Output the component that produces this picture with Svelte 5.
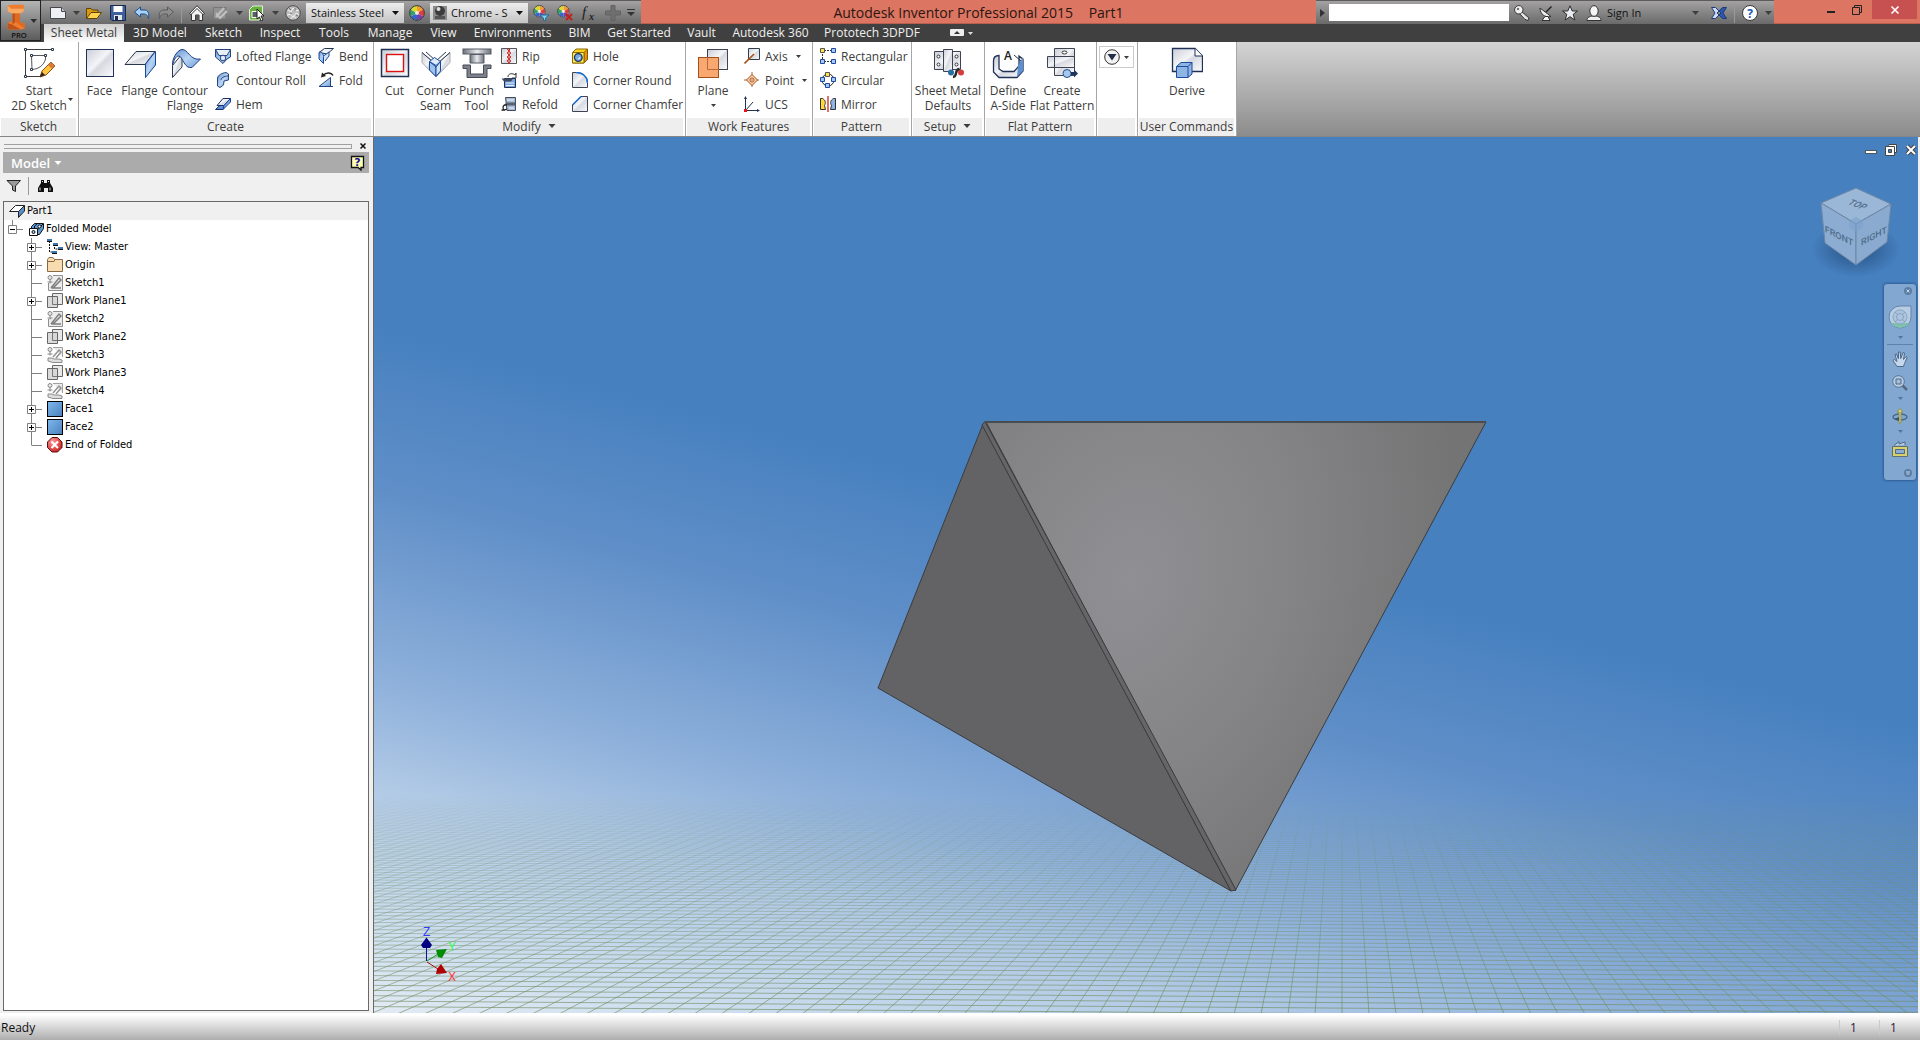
<script lang="ts">
  type Item = { icon: string; label: string; arrow?: boolean };
  type Group = { id: string; title: string; menu?: boolean; big: Item[]; cols: Item[][] };

  const tabs = [
    'Sheet Metal', '3D Model', 'Sketch', 'Inspect', 'Tools', 'Manage', 'View', 'Environments',
    'BIM', 'Get Started', 'Vault', 'Autodesk 360', 'Prototech 3DPDF'
  ];

  const groups: Group[] = [
    { id: 'sketch', title: 'Sketch', big: [{ icon: 'start', label: 'Start\n2D Sketch', arrow: true }], cols: [] },
    {
      id: 'create',
      title: 'Create',
      big: [
        { icon: 'face', label: 'Face' },
        { icon: 'flange', label: 'Flange' },
        { icon: 'contour', label: 'Contour\nFlange' }
      ],
      cols: [
        [
          { icon: 'lofted', label: 'Lofted Flange' },
          { icon: 'roll', label: 'Contour Roll' },
          { icon: 'hem', label: 'Hem' }
        ],
        [
          { icon: 'bend', label: 'Bend' },
          { icon: 'fold', label: 'Fold' }
        ]
      ]
    },
    {
      id: 'modify',
      title: 'Modify',
      menu: true,
      big: [
        { icon: 'cut', label: 'Cut' },
        { icon: 'seam', label: 'Corner\nSeam' },
        { icon: 'punch', label: 'Punch\nTool' }
      ],
      cols: [
        [
          { icon: 'rip', label: 'Rip' },
          { icon: 'unfold', label: 'Unfold' },
          { icon: 'refold', label: 'Refold' }
        ],
        [
          { icon: 'hole', label: 'Hole' },
          { icon: 'round', label: 'Corner Round' },
          { icon: 'chamfer', label: 'Corner Chamfer' }
        ]
      ]
    },
    {
      id: 'work',
      title: 'Work Features',
      big: [{ icon: 'plane', label: 'Plane', arrow: true }],
      cols: [
        [
          { icon: 'axis', label: 'Axis', arrow: true },
          { icon: 'point', label: 'Point', arrow: true },
          { icon: 'ucs', label: 'UCS' }
        ]
      ]
    },
    {
      id: 'pattern',
      title: 'Pattern',
      big: [],
      cols: [
        [
          { icon: 'rectangular', label: 'Rectangular' },
          { icon: 'circular', label: 'Circular' },
          { icon: 'mirror', label: 'Mirror' }
        ]
      ]
    },
    { id: 'setup', title: 'Setup', menu: true, big: [{ icon: 'defaults', label: 'Sheet Metal\nDefaults' }], cols: [] },
    {
      id: 'flat',
      title: 'Flat Pattern',
      big: [
        { icon: 'aside', label: 'Define\nA-Side' },
        { icon: 'flat', label: 'Create\nFlat Pattern' }
      ],
      cols: []
    },
    { id: 'convert', title: '', big: [], cols: [] },
    { id: 'user', title: 'User Commands', big: [{ icon: 'derive', label: 'Derive' }], cols: [] }
  ];

  // level, label, icon, branch: plus / minus / line / last
  const tree: [number, string, string, string][] = [
    [0, 'Part1', 'part', ''],
    [1, 'Folded Model', 'folded', 'minus'],
    [2, 'View: Master', 'view', 'plus'],
    [2, 'Origin', 'folder', 'plus'],
    [2, 'Sketch1', 'tsketch', 'line'],
    [2, 'Work Plane1', 'tplane', 'plus'],
    [2, 'Sketch2', 'tsketch', 'line'],
    [2, 'Work Plane2', 'tplane', 'line'],
    [2, 'Sketch3', 'tshared', 'line'],
    [2, 'Work Plane3', 'tplane', 'line'],
    [2, 'Sketch4', 'tshared', 'line'],
    [2, 'Face1', 'tface', 'plus'],
    [2, 'Face2', 'tface', 'plus'],
    [2, 'End of Folded', 'end', 'last']
  ];

  // floor grid, drawn in perspective
  const horizon = 604;
  const vanishX = 1342;
  let rows = '';
  for (let z = 72; z < 160; z++) {
    const d = 29500 / z;
    const tilt = d * 0.000018;
    const left = horizon + d - 968 * tilt;
    const right = horizon + d + 576 * tilt;
    rows += `M374 ${left.toFixed(2)}L1918 ${right.toFixed(2)}`;
  }
  let rays = '';
  for (let i = -90; i < 60; i++) {
    const x = i * 27;
    rays += `M${(vanishX + x * 0.42).toFixed(1)} 776L${vanishX + x} 1014`;
  }

  // 32 x 32 ribbon icons
  const large: Record<string, string> = {
    start: `<g fill="none" stroke="#3b3b3b"><path d="M2.5 2.5H29M2.5 2.5V29.5H17"/><path d="M8.5 8.5H22.5V12C21 18 16 22 9 22.5Z" fill="#fff" stroke="#555"/></g><g fill="#fff" stroke="#26364d"><path d="M1.500 1.500h2v2h-2zM28.500 1.500h2v2h-2zM1.500 28.500h2v2h-2zM7.500 7.500h2v2h-2zM21.500 7.500h2v2h-2zM7.500 21.500h2v2h-2z"/></g><path d="M17 30l2-6 9-9 4 4-9 9z" fill="#ffc53d" stroke="#8a4b14"/><path d="M25 18l4 4 3-3-4-4z" fill="#d87a3c"/><path d="M17 30l2-5 3 3z" fill="#222"/>`,
    face: `<rect x="2.500" y="2.500" width="27" height="27" fill="url(#metal)" stroke="#1f3156"/>`,
    flange: `<path d="M1 17.500L12 4.500H31L21 17.500z" fill="url(#metal)" stroke="#27364e"/><path d="M31.500 4.500V18L21.500 30.500V17z" fill="url(#blue)" stroke="#16479a"/>`,
    contour: `<path d="M3.500 18.500L13 7V20L3.500 30.500z" fill="url(#metal)" stroke="#27364e"/><path d="M3.500 18C3 12 8 3 13 2.500C19 2 21 14 31.500 12L23 20.500C15 22 14 10 10 9C6 9 5 14 3.500 18z" fill="url(#blue)" stroke="#1c3f7d"/>`,
    cut: `<rect x="2.500" y="2.500" width="27" height="27" fill="url(#metal)" stroke="#1f3156" stroke-width="1.500"/><rect x="7.500" y="7.500" width="17" height="17" fill="#fff" stroke="#d11" stroke-width="1.400"/>`,
    seam: `<path d="M2 5.500L15 17V29L2 15.500z" fill="url(#metal)" stroke="#aaa"/><path d="M30 5.500L17 17V29L30 15.500z" fill="url(#metal)" stroke="#aaa"/><path d="M2 5.500l13 11M6 5l10 9L26 5M30 5.500L18 16" fill="none" stroke="#27364e"/><path d="M9.500 14.500L16 20V29.500L9.500 23z" fill="#9ec3ee" stroke="#16479a"/><path d="M20.500 14.500L16 20V29.500L20.500 24z" fill="#cfe2f8" stroke="#16479a"/><path d="M9.500 14.500l5-4 6 4-4.500 4z" fill="#dcebfb" stroke="#16479a"/>`,
    punch: `<path d="M9 7.500H23V16H9z" fill="url(#steel)" stroke="#555a63"/><rect x="2" y="2" width="28" height="5" fill="url(#steel)" stroke="#555a63"/><path d="M2 18H9.500V27H22.500V18H30V21.500H26V30.500H6V21.500H2z" fill="#7d838d" stroke="#464b54"/>`,
    plane: `<rect x="10.500" y="2.500" width="20" height="20" fill="url(#metal)" stroke="#3a4456"/><rect x="1.500" y="10.500" width="20" height="20" fill="#f9a468" fill-opacity=".95" stroke="#a4501c"/><path d="M10.500 10.500V22.500H21.500" fill="none" stroke="#b96a3a"/>`,
    defaults: `<path d="M2.500 4.500H28.500V22.500H2.500z" fill="url(#metal)" stroke="#3d4350"/><path d="M11.500 2.500H20.500V24.500H11.500z" fill="url(#metal)" stroke="#3d4350"/><g fill="#fff" stroke="#333"><circle cx="6.500" cy="9.500" r="1.500"/><circle cx="6.500" cy="17.500" r="1.500"/><circle cx="24.500" cy="9.500" r="1.500"/><circle cx="24.500" cy="17.500" r="1.500"/></g><circle cx="19" cy="25.500" r="3" fill="#2a6ea8"/><circle cx="29" cy="25.500" r="3" fill="#d83b3b"/><path d="M21 30c5 0 1-8 6.500-8" fill="none" stroke="#2b2b2b" stroke-width="2.500"/>`,
    aside: `<path d="M1.500 14C1.500 10 4 8.500 7 8.500V22L11 24.500H22L27 19V9L31 12V24L25 30.500H7L1.500 25z" fill="url(#metal)" stroke="#1f3156" stroke-width="1.300"/><path d="M26 19l5-9v14l-6 6z" fill="#5b8fd0"/><path d="M22 8l7 6" stroke="#333"/><text x="16" y="13" text-anchor="middle" font-family="Open Sans, sans-serif" font-size="12" font-weight="600" fill="#222">A</text>`,
    flat: `<path d="M8.500 1.500H28.500V28.500H8.500z" fill="url(#metal)" stroke="#3d4350"/><path d="M1.500 9.500H28.500V20.500H1.500z" fill="url(#metal)" stroke="#3d4350"/><path d="M8.500 9V21" stroke="#3d4350"/><ellipse cx="18.500" cy="5.500" rx="2.500" ry="1.500" fill="#fff" stroke="#333"/><circle cx="21" cy="26.500" r="4" fill="#a7c7ee" stroke="#24508e"/><path d="M25 25h3v-2.500l4 4-4 4V28h-3z" fill="#1d355c"/>`,
    derive: `<path d="M1.500 1.500H24L31.500 9V24.500H1.500z" fill="url(#metal)" stroke="#1f3156" stroke-width="1.300"/><path d="M24 1.500V9H31.500" fill="#fff" stroke="#1f3156"/><path d="M5.500 19.500L10 15.500H21V27L17 30.500H5.500z" fill="#8fb6e3" stroke="#1c4ba0"/><path d="M5.500 19.500H17V30.500M17 19.500L21 15.500" fill="none" stroke="#1c4ba0"/>`
  };

  // 16 x 16 icons
  const small: Record<string, string> = {
    lofted: `<path d="M.5 1.500H15.500V9L12 11 8 15.500 4 12 .5 9z" fill="url(#blue)" stroke="#24457f"/><path d="M.5 1.500H15.500L12 7.500H4z" fill="#e9eff7" stroke="#24457f"/><circle cx="8" cy="10" r="2.800" fill="#dde9f8" stroke="#24457f"/>`,
    roll: `<path d="M2.500 6C3 3 7 1 11 .500L13.500 2V8L9 9 8.500 13 5 15.500 2.500 14z" fill="url(#blue)" stroke="#24457f"/><path d="M6 8c0-2 3-4 7-4" fill="none" stroke="#24457f"/>`,
    hem: `<path d="M.5 13.500L7 7.500H12L8 13.500z" fill="#5d8fd0" stroke="#16306a"/><path d="M2 9.500L8 2.500H15.500L9 9.500z" fill="url(#metal)" stroke="#16306a"/><path d="M9 9.500L15.500 2.500V6L8 13.500z" fill="#7eabe3" stroke="#1c3f9a"/>`,
    bend: `<path d="M1 4.500L6.500 .500H15.500L9 6z" fill="#eef3fa" stroke="#27364e"/><path d="M1 4.500C3 3 5 5 5.500 8V15.500L1 11z" fill="url(#blue)" stroke="#16479a"/><path d="M5.500 8L11 4V8L7 13" fill="#cfe2f8" stroke="#16479a"/>`,
    fold: `<path d="M1 14.500L12.500 5.500V14.500z" fill="url(#blue)" stroke="#24457f"/><path d="M1 14.500H15" stroke="#24457f"/><path d="M5 3.500C8 0 13 0 15 3.500" fill="none" stroke="#222" stroke-width="1.500"/><path d="M3 5.500L4 .500 8 4z" fill="#222"/>`,
    rip: `<path d="M.5 .500H15.500V15.500H.5z" fill="url(#metal)" stroke="#555"/><path d="M6 1l3 2-3 2 3 2-3 2 3 2-3 2 3 2M9 1l-2 2 3 2-3 2 3 2-3 2 3 2-3 2" fill="none" stroke="#d32222"/>`,
    unfold: `<path d="M3.500 6.500H14.500V15.500H3.500z" fill="#7ba5dd" stroke="#1f3156"/><path d="M.5 6.500H12L10 9.500H3z" fill="#3d4a60"/><path d="M5 11h8M5 13.500h8" stroke="#e6effa"/><path d="M7 5c0-4 5-4 7-2l1-2v5h-4" fill="none" stroke="#333"/>`,
    refold: `<path d="M4.500 1.500H14.500V14.500H6z" fill="#a5b8d4" stroke="#444c5a"/><path d="M6 6.500H14.500V9.500H2z" fill="#59616e"/><path d="M6 4h7M8 12h5" stroke="#f3f6fa"/><path d="M6 9c-4-1-5 3-3 5H.5M3 14l3-1" fill="none" stroke="#222" stroke-width="1.300"/>`,
    hole: `<path d="M.5 4.500L4 1H15.500V11.500L12 15H.5z" fill="#ffd21f" stroke="#8a6a00"/><path d="M12 4.500L15.500 1V11.500L12 15z" fill="#e8940a" stroke="#8a5a00"/><path d="M.5 4.500H12V15H.5z" fill="#ffe95a" stroke="#8a6a00"/><circle cx="6.300" cy="9.500" r="3.800" fill="#7aa9e0" stroke="#17325f" stroke-width="1.300"/><path d="M6 11a2 2 0 0 0 2-2" stroke="#fff" fill="none"/>`,
    round: `<path d="M.5 .500H5C11 .500 15.500 5 15.500 11V15.500H.5z" fill="url(#metal)" stroke="#3d4350"/><path d="M4 .500C11 .500 15.500 5 15.500 11" fill="none" stroke="#1c6fd0" stroke-width="1.500"/>`,
    chamfer: `<path d="M.5 15.500V9L9 .500H15.500V15.500z" fill="url(#metal)" stroke="#3d4350"/><path d="M.5 9L9 .500" stroke="#1c6fd0" stroke-width="1.500"/>`,
    axis: `<path d="M4.500 .500H15.500V11.500H4.500z" fill="url(#metal)" stroke="#333c4a"/><path d="M.5 15.500L10 6" stroke="#a8521e" stroke-width="1.600"/>`,
    point: `<path d="M8 0V16M0 8H16" stroke="#b2622b" stroke-dasharray="3 1"/><path d="M8 2.500L13.500 8 8 13.500 2.500 8z" fill="#fbd0a4" stroke="#a8521e"/><circle cx="8" cy="8" r="2" fill="#fff" stroke="#a8521e"/><circle cx="8" cy="8" r=".8" fill="#a8521e"/>`,
    ucs: `<path d="M1.500 13V1M1.500 14.500H15M2 14L9 6" fill="none" stroke="#1f3156"/><path d="M1.500 0L0 3h3zM16 14.500L13 13v3z" fill="#1f3156"/><path d="M0 13h3v3H0z" fill="#e11"/>`,
    rectangular: `<path d="M2.500 3V13M4 2.500H12M4 13.500H12" stroke="#333" stroke-dasharray="2 1"/><path d="M.5 .500h4v4h-4z" fill="#ffe14a" stroke="#555"/><path d="M11.500 .500h4v4h-4zM.5 11.500h4v4h-4zM11.500 11.500h4v4h-4z" fill="#a6c8f2" stroke="#1c4ba0"/>`,
    circular: `<circle cx="8" cy="8" r="6" fill="none" stroke="#222"/><path d="M5.500 .500h4v4h-4z" fill="#ffe14a" stroke="#555"/><path d="M.5 5.500h4v4h-4zM11.500 5.500h4v4h-4zM5.500 11.500h4v4h-4z" fill="#a6c8f2" stroke="#1c4ba0"/>`,
    mirror: `<path d="M8 0V16" stroke="#d32222" stroke-width="1.300"/><path d="M.5 2.500H2.500C5.500 4 6 7 4.500 9.500L5.500 13.500H.5z" fill="#ffd93a" stroke="#333"/><path d="M15.500 2.500H13.500C10.500 4 10 7 11.500 9.500L10.500 13.500H15.500z" fill="#8fb6e3" stroke="#333"/>`,

    // title bar
    new: `<path d="M.5 2.500H11.500L15.500 6.500V13.500H.5z" fill="#eef0f3" stroke="#44474d"/><path d="M11.500 2.500V6.500H15.500" fill="#c7ccd4" stroke="#44474d"/>`,
    open: `<path d="M.5 13.500V3.500H5L6.500 5H12V8" fill="#d99a12" stroke="#5e430a"/><path d="M.5 13.500L5 7.500H15.500L11 13.500z" fill="#ffd34d" stroke="#5e430a"/>`,
    save: `<path d="M.5 .500H15.500V15.500H2L.5 14z" fill="#3e5f99" stroke="#16294d"/><path d="M3.500 1H12.500V7H3.500z" fill="#fff"/><path d="M4 10H12V15H4z" fill="#e4e7ec"/><path d="M5 11h3v4H5z" fill="#1b2b4a"/>`,
    undo: `<path d="M.5 7L6.500 2V5H10C14 5 15.500 8 14.500 13.500C13.500 10 12 9 10 9H6.500V12z" fill="#a9d1f7" stroke="#1b4f8c"/>`,
    redo: `<path d="M15.500 7L9.500 2V5H6C2 5 .500 8 1.500 13.500C2.500 10 4 9 6 9H9.500V12z" fill="#8e8e8e" stroke="#5a5a5a"/>`,
    home: `<path d="M2.500 8V15.500H6.500V10H10V15.500H13.500V8L8 3z" fill="#f2f2f2" stroke="#333"/><path d="M.5 8.500L8 .700 15.500 8.500 14 9.500 8 3.500 2 9.500z" fill="#fff" stroke="#333"/><path d="M6.500 15V10H10V15z" fill="#555"/>`,
    update: `<path d="M.5 2.500H13V14H.5z" fill="#929292" stroke="#777"/><path d="M3 12L11 3M3 8l4 5 7-7" stroke="#c0c0c0" stroke-width="2" fill="none"/>`,
    select: `<path d="M.5 4.500L4 1H13.500V11L10 15H.5z" fill="#65b13c" stroke="#e4f4d8"/><path d="M3 6.500h6v6H3z" fill="#5a5f66" stroke="#fff"/><path d="M8 4L15 11H12L14 15 12 16 10.500 12 8 14z" fill="#fff" stroke="#222"/>`,
    ball: `<circle cx="8" cy="8" r="7.300" fill="#bcbcbc" stroke="#4e4e4e"/><path d="M3 5l3 2 2-4 3 3 3-1M2 10l4-1 2 3 3-4 3 2M6 14l2-3 3 2" fill="none" stroke="#f4f4f4"/><path d="M4 3l2 2M10 3v3M5 8l2 1M11 10l2 1" stroke="#777"/>`,
    wheel: `<circle cx="8" cy="8" r="7.500" fill="#fff"/><path d="M8 8V.800A7.200 7.200 0 0 1 14.200 4.400z" fill="#f49b30"/><path d="M8 8L14.200 4.400A7.200 7.200 0 0 1 14.200 11.600z" fill="#e0403a"/><path d="M8 8L14.200 11.600A7.200 7.200 0 0 1 8 15.200z" fill="#7a3fa8"/><path d="M8 8V15.200A7.200 7.200 0 0 1 1.800 11.600z" fill="#3366cc"/><path d="M8 8L1.800 11.600A7.200 7.200 0 0 1 1.800 4.400z" fill="#35a06a"/><path d="M8 8L1.800 4.400A7.200 7.200 0 0 1 8 .800z" fill="#d9d92e"/><circle cx="8" cy="8" r="7.400" fill="none" stroke="#333"/><circle cx="8" cy="8" r="2" fill="#fff" opacity=".8"/>`,
    fx: `<text x="1" y="12" font-family="Liberation Serif, serif" font-style="italic" font-size="15" fill="#1d1d1d">f</text><text x="8" y="15" font-family="Liberation Serif, serif" font-style="italic" font-weight="700" font-size="10" fill="#1d1d1d">x</text>`,
    plus: `<path d="M6 0.500H10V6H15.500V10H10V15.500H6V10H.5V6H6z" fill="#6f6f6f" stroke="#626262"/>`,
    key: `<path d="M5 8l2-2 8 7-1 2.500-3-1z" fill="#e3e3e3" stroke="#333"/><circle cx="4.800" cy="4.800" r="4.200" fill="#f4f4f4" stroke="#333"/><circle cx="4" cy="4" r="1.300" fill="#777"/>`,
    dish: `<path d="M2 3C2 9 7 13 13 11.500z" fill="#eee" stroke="#333"/><path d="M8 7L13.500 1.500" stroke="#222" stroke-width="1.500"/><path d="M4 15.500L7 11.500H10L12 15.500z" fill="#f6f6f6" stroke="#333"/>`,
    star: `<path d="M8 .800L10.200 6H15.500L11.200 9.300 12.800 15 8 11.700 3.200 15 4.800 9.300.500 6H5.800z" fill="#e9ecf2" stroke="#2b2b2b"/>`,
    person: `<path d="M1 15.500C1 12 4 11.500 6 11H10C12 11.500 15 12 15 15.500z" fill="#eee" stroke="#333"/><ellipse cx="8" cy="6" rx="4.200" ry="5.300" fill="#f4f4f4" stroke="#333"/>`,
    exchange: `<path d="M.5 2.500H4.500L8 6 6 8 8 10 4.500 13.500H.5L4 8z" fill="#cfdcf5" stroke="#1f3b78"/><path d="M15.500 2.500H11.500L8 6 10 8 8 10 11.500 13.500H15.500L12 8z" fill="#2d57ad" stroke="#1f3b78"/>`,
    help: `<circle cx="8" cy="8" r="7.500" fill="#fff" stroke="#3a3a3a"/><text x="8" y="13" text-anchor="middle" font-family="Open Sans, sans-serif" font-size="12" font-weight="700" fill="#2057b0">?</text>`,

    // browser
    part: `<path d="M.5 8.500L6.500 2.500H15.500L9.500 8.500z" fill="#fff" stroke="#222"/><path d="M15.500 2.500V8L9.500 14.500V8.500z" fill="#5b8fc7" stroke="#222"/>`,
    folded: `<path d="M3.500 5.500L6.500 2.500H15.500V7.500L11.500 13.500H3.500z" fill="#5e9ad6" stroke="#111"/><path d="M1.500 7.500H9.500V14.500H1.500z" fill="#fff" stroke="#111"/><path d="M6.500 7V5L9 3M9.500 9L15 3" fill="none" stroke="#111"/><circle cx="11.500" cy="5.500" r="1.500" fill="#fff" stroke="#111"/><circle cx="5.500" cy="11" r="1.500" fill="#9cc4ec" stroke="#111"/>`,
    view: `<path d="M2.500 2V13H6M7.500 5V10H12" fill="none" stroke="#111" stroke-dasharray="2 1"/><path d="M0 0h5v3H0zM6 4h5v3H6zM11 8h5v3h-5zM5 12h5v3H5z" fill="#3e76b4"/><path d="M0 2.500h5M6 6.500h5M11 10.500h5M5 14.500h5" stroke="#111"/>`,
    folder: `<path d="M.5 2.500L2 .500H6L7.500 2.500H15.500V14.500H.5z" fill="#f6dcae" stroke="#8a6a45"/><path d="M1 4.500H7L8 2.500" fill="none" stroke="#8a6a45"/>`,
    tsketch: `<path d="M6 .500H15.500V15.500H1.500V8" fill="#ececec" stroke="#8f8f8f"/><path d="M4 13L12 3l2 2-8 8H14" fill="none" stroke="#7d7d7d" stroke-width="1.500"/><circle cx="3" cy="2.500" r="2" fill="#e6e6e6" stroke="#888"/><path d="M3 4.500v4M.5 7h5" stroke="#888"/>`,
    tshared: `<path d="M6 .500H15.500V10" fill="#ececec" stroke="#a0a0a0"/><path d="M6 10L12 3l2 2-5 6" fill="none" stroke="#929292" stroke-width="1.500"/><circle cx="3" cy="2.500" r="2" fill="#e6e6e6" stroke="#888"/><path d="M3 4.500v4M.5 7h5" stroke="#888"/><path d="M1 11h4l2 1h5l3 1v2.500H6L1 14z" fill="#dedede" stroke="#8a8a8a"/>`,
    tplane: `<path d="M5.500 .500H15.500V11.500H5.500z" fill="#e8e8e8" stroke="#666"/><path d="M.5 3.500H10.500V14.500H.5z" fill="#d4d4d4" fill-opacity=".85" stroke="#666"/><path d="M5.500 4V11.500H10" fill="none" stroke="#777"/>`,
    tface: `<rect x=".5" y=".5" width="15" height="15" fill="url(#tile)" stroke="#000"/>`,
    end: `<path d="M5 .500H10.500L15 5V10.500L10.500 15H5L.5 10.500V5z" fill="url(#stop)" stroke="#5a1111"/><path d="M4.500 4.500L11 11M11 4.500L4.500 11" stroke="#fff" stroke-width="2.200"/>`,
    funnel: `<path d="M1 2.500H14.500L9.500 8V13.500L6.500 12V8z" fill="#9a9a9a" stroke="#222"/>`,
    binoculars: `<path d="M3 2h3v3h3V2h3v3l3 5v4h-5v-4H6v4H0v-4l3-5z" fill="#111"/><path d="M2 9.500v3M12 9.500v3M4.500 3v1M10.500 3v1" stroke="#ddd"/>`,
    tip: `<path d="M1.500 1.500H13.500V12.500H11V15L8 12.500H1.500z" fill="#ffffb4" stroke="#111" stroke-width="1.300"/><text x="7.500" y="11" text-anchor="middle" font-family="DejaVu Sans, sans-serif" font-size="11" font-weight="700" fill="#14149c">?</text>`,

    // navigation bar
    pan: `<path d="M5 15.500L1 9.500 2.500 8.500 5 10.500 3 3.500 4.500 3 6.500 8 6.500 1 8.200 1 8.800 7.500 11 1.500 12.500 2 11.500 8.500 14 5.500 15.200 6.500 12.500 12.500 11.500 15.500z" fill="#c5d7ea" stroke="#4f6988"/>`,
    zoom: `<path d="M10.500 10.500L15 15" stroke="#56677d" stroke-width="2.500"/><circle cx="6.500" cy="6.500" r="5.800" fill="#b8cde4" stroke="#56708f"/><path d="M4 4h5v5H4z" fill="#a3bddb" stroke="#4f6988"/>`,
    orbit: `<ellipse cx="8" cy="9" rx="7" ry="3" fill="none" stroke="#4a6788" stroke-width="1.400"/><path d="M7 15V4H5L8 .500 11 4H9V15z" fill="#d8d068" stroke="#8d8f58"/><path d="M2 11l5-2v4z" fill="#3c546f"/>`,
    look: `<path d="M.5 5.500H15.500V15.500H.5z" fill="#d8d068" stroke="#5f6f70"/><path d="M3.500 8.500H12.500V12.500H3.500z" fill="#8aaed4" stroke="#4f6988"/><path d="M2 4.500L7 .500V3L13 1V4" fill="#b8cde4" stroke="#4f6988"/>`
  };

  let activeTab = 'Sheet Metal';
  let search = '';
</script>

{#snippet icon(name: string)}
  <svg class="icon" viewBox="0 0 16 16" aria-hidden="true">{@html small[name]}</svg>
{/snippet}

{#snippet caret()}
  <svg class="caret" viewBox="0 0 7 4" aria-hidden="true"><path d="M0 0H7L3.500 4z" fill="currentColor" /></svg>
{/snippet}

{#snippet quick(name: string, label: string)}
  <button class="quick" aria-label={label}>{@render icon(name)}</button>
{/snippet}

{#snippet quickMenu(label: string)}
  <button class="quick-menu" aria-label={label}>{@render caret()}</button>
{/snippet}

<svg class="defs" width="0" height="0" aria-hidden="true">
  <defs>
    <linearGradient id="metal" x1="0" y1="0" x2="1" y2="1">
      <stop offset="0" stop-color="#c9cdd6" />
      <stop offset=".45" stop-color="#f4f5f8" />
      <stop offset=".55" stop-color="#d6d9e0" />
      <stop offset="1" stop-color="#fbfbfd" />
    </linearGradient>
    <linearGradient id="blue" x1="0" y1="0" x2="1" y2="1">
      <stop offset="0" stop-color="#5f8fcf" />
      <stop offset=".5" stop-color="#b9d4f3" />
      <stop offset="1" stop-color="#6d9dd8" />
    </linearGradient>
    <linearGradient id="steel">
      <stop offset="0" stop-color="#6b717b" />
      <stop offset=".5" stop-color="#e9ebef" />
      <stop offset="1" stop-color="#6b717b" />
    </linearGradient>
    <linearGradient id="tile" x1="0" y1="0" x2="1" y2="1">
      <stop offset="0" stop-color="#7db9ee" />
      <stop offset="1" stop-color="#4a80ba" />
    </linearGradient>
    <radialGradient id="stop" cx=".35" cy=".3" r=".8">
      <stop offset="0" stop-color="#ff9a9a" />
      <stop offset="1" stop-color="#c81818" />
    </radialGradient>
  </defs>
</svg>

<div class="window">
  <header>
    <button class="app-button" aria-label="Application menu">
      <svg viewBox="0 0 40 40" aria-hidden="true">
        <path d="M7 4L12 3H24V10L20 12V21L25 23V28L21 29H7V22L12 20V12L7 10z" fill="#f07c2e" />
        <path d="M7 4L12 8V12L7 10zM12 7H24V10L20 12H12z" fill="#f9aa62" />
        <path d="M12 12H15V21L12 24zM7 22L12 24 21 29H7z" fill="#bd541b" />
        <path d="M20 12V21L25 23V28L15 21V12z" fill="#de6a22" />
        <path d="M31 18H38L34.500 22z" fill="#2e2e2e" />
        <text x="19" y="38" text-anchor="middle">PRO</text>
      </svg>
    </button>

    <div class="title-bar">
      <div class="toolbar quick-access">
        {@render quick('new', 'New')}
        {@render quickMenu('New options')}
        {@render quick('open', 'Open')}
        {@render quick('save', 'Save')}
        {@render quick('undo', 'Undo')}
        {@render quick('redo', 'Redo')}
        <span class="divider"></span>
        {@render quick('home', 'Home')}
        {@render quick('update', 'Update')}
        {@render quickMenu('Update options')}
        {@render quick('select', 'Select')}
        {@render quickMenu('Select options')}
        {@render quick('ball', 'Material')}
        <span class="combo">
          <select aria-label="Material"><option>Stainless Steel</option></select>
          {@render caret()}
        </span>
        {@render quick('wheel', 'Appearance')}
        <span class="combo chrome">
          <svg class="icon" viewBox="0 0 16 16" aria-hidden="true">
            <path d="M1 1h14v14H1z" fill="#8b8b8b" /><circle cx="8" cy="6" r="5" fill="#3c3c3c" />
            <circle cx="6.500" cy="4" r="2" fill="#ddd" /><path d="M3 11h10v3H3z" fill="#555" />
          </svg>
          <select aria-label="Appearance"><option>Chrome - S</option></select>
          {@render caret()}
        </span>
        <button class="quick" aria-label="Adjust">
          <svg class="icon" viewBox="0 0 16 16" aria-hidden="true">
            <g transform="scale(.8)">{@html small.wheel}</g>
            <path d="M7 10h9l-3.500 3v2.500h-2V13z" fill="#7fd0f5" stroke="#1e6c9c" />
          </svg>
        </button>
        <button class="quick" aria-label="Clear">
          <svg class="icon" viewBox="0 0 16 16" aria-hidden="true">
            <g transform="scale(.8)">{@html small.wheel}</g>
            <path d="M9 9l6 6M15 9l-6 6" stroke="#c3201a" stroke-width="2" />
          </svg>
        </button>
        {@render quick('fx', 'Parameters')}
        {@render quick('plus', 'Add')}
        <button class="quick-menu" aria-label="Customize">
          <svg class="icon" viewBox="0 0 16 16" aria-hidden="true">
            <path d="M4 4.500h8" stroke="#333" /><path d="M4 7h8l-4 4z" fill="#333" />
          </svg>
        </button>
      </div>

      <h1>Autodesk Inventor Professional 2015 <span>Part1</span></h1>

      <div class="toolbar info-center">
        <button class="quick-menu" aria-label="Collapse search">
          <svg class="side" viewBox="0 0 5 8" aria-hidden="true"><path d="M0 0L5 4 0 8z" fill="#333" /></svg>
        </button>
        <input type="search" aria-label="Search help" bind:value={search} />
        {@render quick('key', 'Subscription')}
        {@render quick('dish', 'Communication')}
        {@render quick('star', 'Favorites')}
        <button class="sign-in">{@render icon('person')}Sign In</button>
        {@render quickMenu('Account')}
        {@render quick('exchange', 'Exchange apps')}
        <span class="divider"></span>
        {@render quick('help', 'Help')}
        {@render quickMenu('Help options')}
      </div>

      <div class="window-buttons">
        <button aria-label="Minimize">
          <svg viewBox="0 0 10 10" aria-hidden="true"><path d="M1 6h8v2H1z" fill="#222" /></svg>
        </button>
        <button aria-label="Restore">
          <svg viewBox="0 0 10 10" aria-hidden="true">
            <path d="M.5 2.500h7v7h-7zM2.500 2V.500h7v7H8" fill="none" stroke="#222" />
          </svg>
        </button>
        <button class="close" aria-label="Close">
          <svg viewBox="0 0 10 10" aria-hidden="true"><path d="M1.500 1.500l7 7M8.500 1.500l-7 7" stroke="#fff" stroke-width="1.600" /></svg>
        </button>
      </div>
    </div>

    <nav class="tabs">
      {#each tabs as tab}
        <button class:active={tab === activeTab} on:click={() => (activeTab = tab)}>{tab}</button>
      {/each}
      <button class="ribbon-toggle" aria-label="Ribbon display">
        <svg viewBox="0 0 24 8" aria-hidden="true">
          <rect width="14" height="7" rx="1" fill="#eee" /><path d="M4 5h6L7 2z" fill="#333" />
          <path d="M18 3h5l-2.500 3z" fill="#ddd" />
        </svg>
      </button>
    </nav>
  </header>

  <div class="ribbon">
    {#each groups as group}
      <section class="group {group.id}">
        <div class="tools">
          {#each group.big as item}
            <button class="big">
              <svg viewBox="0 0 32 32" aria-hidden="true">{@html large[item.icon]}</svg>
              <span>{item.label}</span>
              {#if item.arrow}{@render caret()}{/if}
            </button>
          {/each}
          {#each group.cols as col}
            <div class="stack">
              {#each col as item}
                <button class="small">
                  {@render icon(item.icon)}{item.label}
                  {#if item.arrow}{@render caret()}{/if}
                </button>
              {/each}
            </div>
          {/each}
          {#if group.id === 'convert'}
            <button class="convert-button" aria-label="Convert">
              <svg class="icon" viewBox="0 0 16 16" aria-hidden="true">
                <circle cx="8" cy="8" r="7.300" fill="#f2f2f2" stroke="#333" />
                <path d="M3.500 5h9L8 11.500z" fill="#222f44" />
              </svg>
              {@render caret()}
            </button>
          {/if}
        </div>
        <h2>{group.title}{#if group.menu}{@render caret()}{/if}</h2>
      </section>
    {/each}
  </div>

  <main>
    <aside>
      <div class="grip">
        <span></span>
        <button aria-label="Close panel">
          <svg viewBox="0 0 6 6" aria-hidden="true"><path d="M.5 .500l5 5M5.500 .500l-5 5" stroke="#111" stroke-width="1.500" /></svg>
        </button>
      </div>
      <div class="panel-title">
        <button>Model {@render caret()}</button>
        <button aria-label="Panel help">{@render icon('tip')}</button>
      </div>
      <div class="panel-tools">
        <button aria-label="Filter">{@render icon('funnel')}</button>
        <button aria-label="Find">{@render icon('binoculars')}</button>
      </div>
      <ul class="tree">
        {#each tree as [level, label, name, branch]}
          <li class="level{level}">
            {#if branch}
              <svg class="branch" viewBox="0 0 19 18" aria-hidden="true">
                <path d="M4.500 0V{branch === 'last' || level === 1 ? 9 : 18}M4.500 9.500H15" fill="none" stroke="#808080" />
                {#if branch === 'plus' || branch === 'minus'}
                  <path d="M.5 5.500h8v8h-8z" fill="#fff" stroke="#808080" />
                  <path d={branch === 'plus' ? 'M2 9.500h5M4.500 7v5' : 'M2 9.500h5'} stroke="#000" />
                {/if}
              </svg>
            {/if}
            {@render icon(name)}<span>{label}</span>
          </li>
        {/each}
      </ul>
    </aside>

    <div class="viewport">
      <svg class="scene" viewBox="374 137 1544 876" preserveAspectRatio="xMidYMid slice" aria-hidden="true">
        <defs>
          <linearGradient id="floor" gradientUnits="userSpaceOnUse" x1="0" y1="795" x2="0" y2="1013">
            <stop offset="0" stop-color="#6f8c6c" stop-opacity="0" />
            <stop offset=".3" stop-color="#6f8c6c" stop-opacity=".25" />
            <stop offset="1" stop-color="#6f8c5c" stop-opacity=".65" />
          </linearGradient>
          <radialGradient
            id="shine"
            gradientUnits="userSpaceOnUse"
            cx="0"
            cy="0"
            r="420"
            gradientTransform="translate(1130 580) rotate(18) scale(.75 1)"
          >
            <stop offset="0" stop-color="#909094" />
            <stop offset=".5" stop-color="#848486" />
            <stop offset="1" stop-color="#747475" />
          </radialGradient>
        </defs>
        <g fill="none" stroke="url(#floor)">
          <path d={rows} /><path d={rays} />
        </g>
        <path d="M983 424L878 688 1231 891z" fill="#636366" stroke="#3b3b3c" />
        <path d="M986 422H1486L1235 891z" fill="url(#shine)" stroke="#3b3b3c" />
        <path d="M982 425L985 421.500 1236 890 1231 891z" fill="#666668" stroke="#3b3b3c" />
        <path d="M985 422H1486" stroke="#4a4d50" stroke-width="2" />

        <g class="axes">
          <path d="M426.500 961V942" stroke="#1010a0" />
          <path d="M421 945L426.500 937.500 432 945 430 948H423z" fill="#000080" />
          <path d="M427 961L438 954" stroke="#0aa020" />
          <path d="M436 950L447 949 442 958 438 957z" fill="#008c00" />
          <path d="M427 962L438 969" stroke="#a01010" />
          <path d="M441 964L447 973 436 974 437 969z" fill="#b00000" />
          <text x="423" y="936" fill="#3a3aff">Z</text>
          <text x="448" y="951" fill="#2aff4a">Y</text>
          <text x="448" y="981" fill="#ff3030">X</text>
        </g>
      </svg>

      <div class="overlay">
        <div class="doc-buttons">
          <button aria-label="Minimize document">
            <svg viewBox="0 0 12 12" aria-hidden="true"><rect x=".5" y="6.500" width="11" height="3" fill="#fff" stroke="#555" /></svg>
          </button>
          <button aria-label="Restore document">
            <svg viewBox="0 0 12 12" aria-hidden="true">
              <path d="M3.500 .500h8v8h-2" fill="#fff" stroke="#444" />
              <path d="M.5 2.500h9v9h-9z" fill="#fff" stroke="#444" /><path d="M3.500 5.500h3v3h-3z" fill="#4680bf" stroke="#444" />
            </svg>
          </button>
          <button aria-label="Close document">
            <svg viewBox="0 0 12 12" aria-hidden="true">
              <path d="M2 2l8 8M10 2l-8 8" stroke="#444" stroke-width="4" /><path d="M2 2l8 8M10 2l-8 8" stroke="#fff" stroke-width="2" />
            </svg>
          </button>
        </div>

        <svg class="cube" viewBox="0 0 90 100" aria-label="View cube">
          <defs>
            <radialGradient id="shadow">
              <stop offset="0" stop-color="#1d4474" stop-opacity=".8" />
              <stop offset="1" stop-color="#1d4474" stop-opacity="0" />
            </radialGradient>
          </defs>
          <ellipse cx="45" cy="66" rx="44" ry="28" fill="url(#shadow)" />
          <g stroke="#6d87a5" stroke-linejoin="round">
            <path d="M45 5L80 21 45 41 10 20z" fill="#9ab7d7" />
            <path d="M10 20L45 41V82L14 60z" fill="#8cadd1" />
            <path d="M80 21L45 41V82L76 59z" fill="#8aabcf" />
          </g>
          <path d="M45 34l7 4v7l-7 4-7-4v-7z" fill="#7ba1cd" opacity=".6" />
          <text transform="translate(28 56) skewY(27)" text-anchor="middle">FRONT</text>
          <text transform="translate(63 56) skewY(-27)" text-anchor="middle">RIGHT</text>
          <text transform="translate(44 24) rotate(20) skewX(-30)" text-anchor="middle">TOP</text>
        </svg>

        <div class="nav-bar">
          <button class="nav-end" aria-label="Close navigation bar">
            <svg viewBox="0 0 8 8" aria-hidden="true"><circle cx="4" cy="4" r="4" fill="#5b7da5" /><path d="M2.500 2.500l3 3M5.500 2.500l-3 3" stroke="#c8d9ea" /></svg>
          </button>
          <button class="nav-wheel" aria-label="Steering wheel">
            <svg viewBox="0 0 24 24" aria-hidden="true">
              <path d="M23 1V12A11 11 0 1 1 12 1z" fill="#b9cde2" stroke="#6384a9" />
              <path d="M3 18H21A11 11 0 0 1 3 18z" fill="#7fc2ac" />
              <circle cx="12" cy="12" r="7" fill="#adc4dd" stroke="#88a4c4" /><circle cx="12" cy="12" r="3.500" fill="none" stroke="#88a4c4" />
              <path d="M7 7l3 3M17 7l-3 3M7 17l3-3M17 17l-3-3" stroke="#88a4c4" />
            </svg>
          </button>
          <button class="nav-menu" aria-label="Wheel options">{@render caret()}</button>
          <hr />
          <button class="nav-tool" aria-label="Pan">{@render icon('pan')}</button>
          <button class="nav-tool" aria-label="Zoom">{@render icon('zoom')}</button>
          <button class="nav-menu" aria-label="Zoom options">{@render caret()}</button>
          <button class="nav-tool" aria-label="Orbit">{@render icon('orbit')}</button>
          <button class="nav-menu" aria-label="Orbit options">{@render caret()}</button>
          <button class="nav-tool" aria-label="Look at">{@render icon('look')}</button>
          <button class="nav-end last" aria-label="Customize navigation bar">
            <svg viewBox="0 0 8 8" aria-hidden="true"><circle cx="4" cy="4" r="4" fill="#5b7da5" /><path d="M2 3h4M2.500 5h3" stroke="#c8d9ea" /></svg>
          </button>
        </div>
      </div>
    </div>
  </main>

  <footer>
    <span>Ready</span>
    <output>1</output>
    <output>1</output>
  </footer>
</div>

<style>
  :global(body) {
    margin: 0;
    overflow: hidden;
  }

  .defs {
    position: absolute;
  }

  .window {
    display: flex;
    flex-direction: column;
    height: 100vh;
    background: #f0f0f0;
    font: 12px/15px 'Open Sans', 'Noto Sans', sans-serif;
    color: #3c3c3c;
  }

  button,
  select,
  input {
    margin: 0;
    padding: 0;
    border: 0;
    background: none;
    font: inherit;
    color: inherit;
  }

  svg {
    display: block;
    flex: none;
  }

  .icon {
    width: 16px;
    height: 16px;
  }

  .caret {
    width: 5px;
    height: 3px;
  }

  /* Title bar */
  header {
    display: grid;
    grid-template: 24px 18px / 41px 1fr;
    background: #404040;
  }

  .app-button {
    grid-row: 1 / 3;
    height: 41px;
    border: 1px solid #222;
    background: linear-gradient(#b4b4b4, #5c5c5c);
  }

  .app-button svg {
    width: 38px;
    height: 38px;
  }

  .app-button text {
    font-size: 8px;
    font-weight: 600;
    fill: #111;
  }

  .title-bar {
    display: flex;
    background: #dc7561;
    box-shadow: inset 0 -1px #b95f4e;
  }

  .toolbar {
    display: flex;
    align-items: center;
    box-sizing: border-box;
    border-top: 1px solid #5c5c5c;
    background: linear-gradient(#a3a1a2, #6a6a6a);
    color: #3f3f3f;
  }

  .quick-access {
    width: 600px;
    padding-left: 5px;
  }

  .quick {
    display: flex;
    justify-content: center;
    width: 24px;
  }

  .quick-menu {
    display: flex;
    justify-content: center;
    width: 12px;
  }

  .divider {
    width: 1px;
    height: 20px;
    margin: 0 3px;
    background: #999;
  }

  .side {
    width: 5px;
    height: 8px;
  }

  .combo {
    display: flex;
    align-items: center;
    box-sizing: border-box;
    width: 98px;
    height: 20px;
    margin: 0 1px;
    padding: 0 5px;
    background: linear-gradient(#ededed, #c4c4c4);
    font-size: 11px;
    color: #111;
  }

  .combo select {
    flex: 1;
    min-width: 0;
    appearance: none;
  }

  .combo .caret,
  .quick-menu .caret {
    width: 7px;
    height: 4px;
  }

  .combo.chrome {
    gap: 3px;
    padding-left: 2px;
  }

  h1 {
    flex: 1;
    margin: 0;
    font-size: 14px;
    font-weight: 400;
    line-height: 25px;
    text-align: center;
    color: #2a1512;
  }

  h1 span {
    margin-left: 12px;
  }

  .info-center {
    width: 458px;
  }

  .info-center input {
    width: 180px;
    height: 17px;
    margin: 0 1px;
    background: #fff;
  }

  .sign-in {
    display: flex;
    align-items: center;
    gap: 5px;
    flex: 1;
    padding-left: 4px;
    font-size: 11px;
    color: #111;
  }

  .sign-in + .quick-menu {
    width: 24px;
  }

  .window-buttons {
    display: flex;
    align-items: flex-start;
    justify-content: flex-end;
    box-sizing: border-box;
    width: 146px;
    padding-right: 3px;
  }

  .window-buttons button {
    display: flex;
    align-items: center;
    justify-content: center;
    width: 26px;
    height: 19px;
  }

  .window-buttons svg {
    width: 10px;
    height: 10px;
  }

  .window-buttons .close {
    width: 45px;
    margin-left: 2px;
    background: #c75050;
  }

  .tabs {
    display: grid;
    grid-template-columns: 80px 72px 55px 58px 50px 62px 45px 93px 41px 78px 47px 91px 112px auto;
    justify-content: start;
    padding-left: 3px;
    color: #f0f0f0;
  }

  .tabs button {
    padding-bottom: 1px;
    white-space: nowrap;
  }

  .tabs .active {
    background: linear-gradient(#cfcfcf, #fdfdfd);
    color: #3c3c3c;
  }

  .ribbon-toggle svg {
    width: 24px;
    height: 8px;
    margin: 0 22px;
  }

  /* Ribbon */
  .ribbon {
    display: flex;
    height: 94px;
    border-bottom: 1px solid #858585;
    background: linear-gradient(#d4d4d4, #8c8c8c);
  }

  .group {
    display: flex;
    flex-direction: column;
    box-sizing: border-box;
    border-right: 1px solid #a6a6a6;
    background: #fff;
  }

  .tools {
    display: grid;
    flex: 1;
    justify-content: start;
    padding-top: 2px;
  }

  .group h2 {
    display: flex;
    align-items: center;
    justify-content: center;
    gap: 7px;
    height: 16px;
    margin: 0 2px 0 1px;
    padding-bottom: 2px;
    background: #eee;
    font-size: 12px;
    font-weight: 400;
    white-space: nowrap;
  }

  .group h2 .caret {
    width: 8px;
    height: 4px;
  }

  .sketch { width: 79px; }
  .create { width: 295px; }
  .modify { width: 312px; }
  .work { width: 127px; }
  .pattern { width: 99px; }
  .setup { width: 73px; }
  .flat { width: 112px; }
  .convert { width: 41px; }
  .user { width: 99px; }

  .sketch .tools { grid-template-columns: 78px; }
  .create .tools { grid-template-columns: 41px 39px 52px 103px auto; }
  .modify .tools { grid-template-columns: 41px 41px 41px 71px auto; }
  .work .tools { grid-template-columns: 54px auto; }
  .pattern .tools { padding-left: 3px; }
  .setup .tools { grid-template-columns: 72px; }
  .flat .tools { grid-template-columns: 46px 62px; }
  .user .tools { grid-template-columns: 98px; }

  .big {
    display: flex;
    flex-direction: column;
    align-items: center;
    min-width: 0;
    white-space: pre;
  }

  .big > svg:first-child {
    width: 32px;
    height: 32px;
    margin: 3px 0 4px;
  }

  .big .caret {
    margin-top: 6px;
  }

  .sketch .big {
    position: relative;
  }

  .sketch .big .caret {
    position: absolute;
    right: 5px;
    bottom: 17px;
  }

  .stack {
    display: grid;
    grid-auto-rows: 24px;
    padding-left: 4px;
  }

  .small {
    display: flex;
    align-items: center;
    gap: 5px;
    white-space: nowrap;
  }

  .small .caret {
    margin-left: 3px;
  }

  .convert-button {
    display: flex;
    align-items: center;
    justify-content: space-evenly;
    box-sizing: border-box;
    width: 35px;
    height: 22px;
    margin: 2px 2px 0;
    border: 1px solid #ccc;
  }

  /* Model browser */
  main {
    display: flex;
    flex: 1;
    min-height: 0;
    border-bottom: 2px solid #fff;
  }

  aside {
    display: flex;
    flex-direction: column;
    box-sizing: border-box;
    width: 374px;
    padding: 3px 4px 2px 3px;
    border-right: 1px solid #696969;
    font: 11px/18px 'DejaVu Sans Condensed', 'Noto Sans', sans-serif;
    color: #000;
  }

  .grip {
    display: flex;
    align-items: center;
    gap: 5px;
    height: 12px;
  }

  .grip span {
    flex: 1;
    height: 3px;
    margin-left: 1px;
    border: 1px solid #a0a0a0;
    border-left: 0;
  }

  .grip svg {
    width: 6px;
    height: 6px;
    margin: 0 3px;
  }

  .panel-title {
    display: flex;
    align-items: center;
    justify-content: space-between;
    height: 21px;
    padding: 0 3px 0 8px;
    background: #ababab;
    color: #fff;
    font: 600 13px/18px 'Open Sans', sans-serif;
  }

  .panel-title button {
    display: flex;
    align-items: center;
    gap: 4px;
  }

  .panel-title .caret {
    width: 8px;
    height: 4px;
  }

  .panel-tools {
    display: flex;
    align-items: center;
    height: 26px;
    padding: 0 0 2px 3px;
  }

  .panel-tools button {
    padding-right: 6px;
  }

  .panel-tools button + button {
    padding: 1px 0 1px 9px;
    border-left: 1px solid #999;
  }

  .tree {
    flex: 1;
    margin: 0;
    padding: 0;
    border: 1px solid #696969;
    background: #fff;
    list-style: none;
  }

  .tree li {
    display: flex;
    align-items: center;
    gap: 2px;
    height: 18px;
    padding-left: 5px;
  }

  .tree .level0 {
    background: #f0f0f0;
  }

  .tree .level1 {
    padding-left: 4px;
  }

  .tree .level2 {
    padding-left: 23px;
  }

  .branch {
    width: 19px;
    height: 18px;
    margin-right: -1px;
  }

  /* Viewport */
  .viewport {
    position: relative;
    flex: 1;
    min-width: 0;
    margin-right: 2px;
    background: linear-gradient(
      194.6deg,
      #4680bf 46%,
      #608fc8 59%,
      #8fb1db 74%,
      #b0c9e5 82%,
      #cadcee 92%,
      #e2eaf4 100%
    );
  }

  .scene {
    position: absolute;
    width: 100%;
    height: 100%;
  }

  .axes text {
    font: 12px 'Liberation Sans', sans-serif;
  }

  .overlay {
    position: absolute;
    top: 7px;
    right: 1px;
    display: flex;
    flex-direction: column;
    align-items: flex-end;
  }

  .doc-buttons {
    display: flex;
    gap: 8px;
  }

  .doc-buttons svg {
    width: 12px;
    height: 12px;
  }

  .cube {
    width: 90px;
    height: 100px;
    margin: 27px 16px 0 0;
  }

  .cube text {
    font: 500 9px Roboto, sans-serif;
    fill: #506c8c;
  }

  .nav-bar {
    display: flex;
    flex-direction: column;
    align-items: center;
    box-sizing: border-box;
    width: 34px;
    height: 198px;
    border: 1px solid #3566a0;
    border-radius: 4px;
    background: rgba(190, 208, 230, 0.5);
    box-shadow: 0 0 2px #2d5c94;
    color: #56749a;
  }

  .nav-end {
    align-self: flex-end;
    padding: 3px 4px;
  }

  .nav-end.last {
    margin-top: auto;
  }

  .nav-end svg {
    width: 8px;
    height: 8px;
  }

  .nav-wheel {
    padding: 7px 0 5px;
  }

  .nav-wheel svg {
    width: 24px;
    height: 24px;
  }

  .nav-tool {
    padding: 4px 0;
  }

  .nav-menu {
    padding: 2px 0 4px;
  }

  .nav-bar hr {
    width: 26px;
    margin: 1px 0 2px;
    border: 0;
    border-top: 1px solid #5c82ad;
  }

  /* Status bar */
  footer {
    display: flex;
    align-items: center;
    height: 25px;
    padding-right: 1px;
    background: linear-gradient(#fff, #d6d6d6 50%, #adadad);
    color: #111;
  }

  footer span {
    flex: 1;
    padding-left: 1px;
  }

  footer output {
    width: 29px;
    padding-left: 10px;
    border-left: 1px solid #c9c9c9;
    color: #301040;
  }
</style>
